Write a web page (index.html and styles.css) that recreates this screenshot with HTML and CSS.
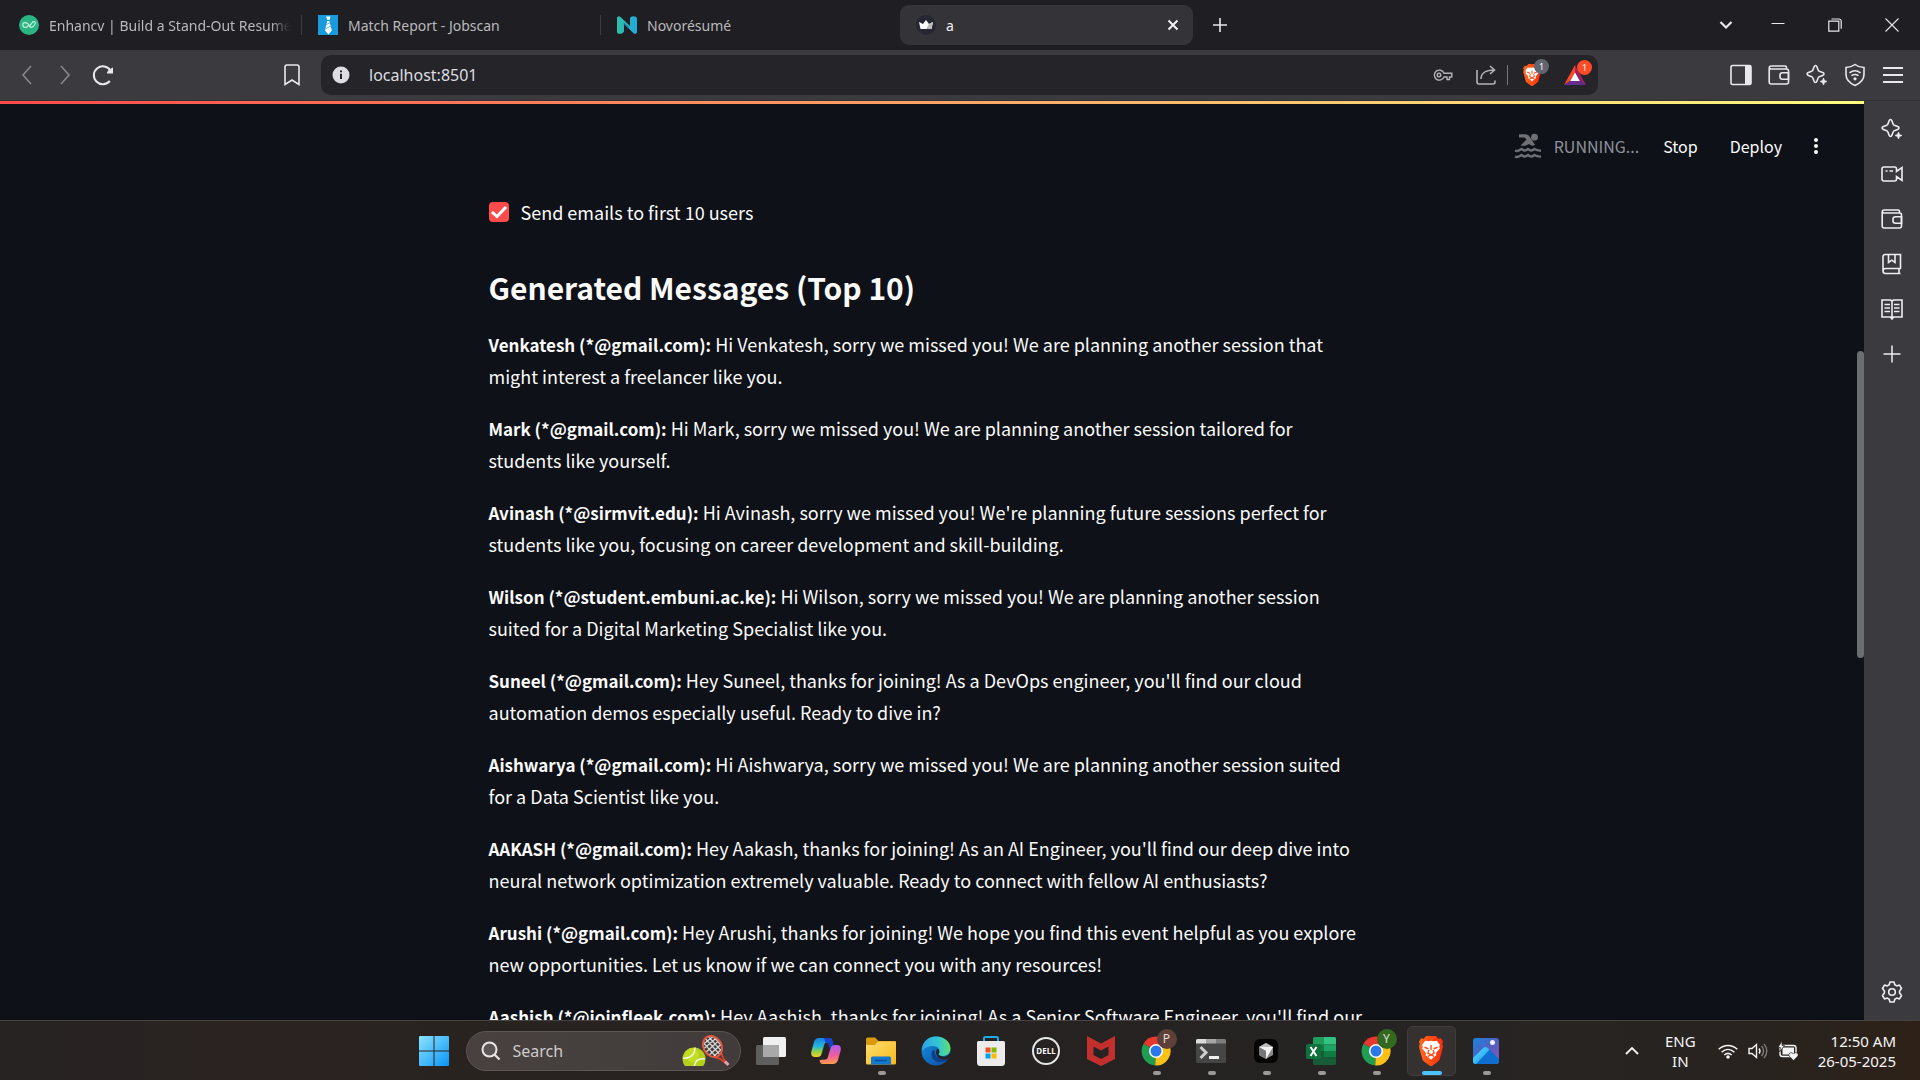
FILE: index.html
```html
<!DOCTYPE html>
<html lang="en">
<head>
<meta charset="utf-8">
<title>a</title>
<link rel="stylesheet" href="styles.css">
</head>
<body>
<svg class="defs" aria-hidden="true">
  <defs>
    <linearGradient id="g-win" x1="0" y1="0" x2="1" y2="1"><stop offset="0" stop-color="#8be4ff"/><stop offset="1" stop-color="#0a94f5"/></linearGradient>
    <linearGradient id="g-novo" x1="0" y1="0" x2="1" y2="0"><stop offset="0" stop-color="#2fbfa4"/><stop offset="1" stop-color="#1fa9de"/></linearGradient>
    <linearGradient id="g-lion" x1="0" y1="0" x2="1" y2="0"><stop offset="0" stop-color="#ff6a1f"/><stop offset="1" stop-color="#ff2c0a"/></linearGradient>
    <linearGradient id="g-folder" x1="0" y1="0" x2="1" y2="1"><stop offset="0" stop-color="#ffdf6e"/><stop offset="1" stop-color="#f9b81c"/></linearGradient>
    <linearGradient id="g-edge1" x1="0" y1="0" x2="1" y2="0"><stop offset="0" stop-color="#2aa4e8"/><stop offset=".6" stop-color="#35c8d0"/><stop offset="1" stop-color="#5fe06a"/></linearGradient>
    <linearGradient id="g-edge2" x1="0" y1="0" x2="1" y2="1"><stop offset="0" stop-color="#1590e0"/><stop offset="1" stop-color="#0c4aa0"/></linearGradient>
    <linearGradient id="g-cop1" x1="0" y1="0" x2="0" y2="1"><stop offset="0" stop-color="#1a7fe6"/><stop offset=".45" stop-color="#22b8d8"/><stop offset=".7" stop-color="#8bd14a"/><stop offset="1" stop-color="#f8cf2d"/></linearGradient>
    <linearGradient id="g-cop2" x1="0" y1="0" x2="0" y2="1"><stop offset="0" stop-color="#b05bf0"/><stop offset=".55" stop-color="#ee5e9c"/><stop offset="1" stop-color="#ff9b4a"/></linearGradient>
    <linearGradient id="g-photo" x1="0" y1="0" x2="1" y2="1"><stop offset="0" stop-color="#1784dc"/><stop offset=".55" stop-color="#5a5cc0"/><stop offset="1" stop-color="#8a58c0"/></linearGradient>
    <linearGradient id="g-hill" x1="0" y1="0" x2="1" y2="1"><stop offset="0" stop-color="#5fe0ff"/><stop offset="1" stop-color="#1592ea"/></linearGradient>
    <symbol id="i-sparkle" viewBox="0 0 22 22"><path d="M9.500 1.500c.7 0 1.100.5 1.400 1.300l1.200 3.300c.2.600.6 1 1.200 1.200l3.400 1.300c1.700.6 1.700 2.200 0 2.800l-3.400 1.300c-.6.200-1 .6-1.200 1.200l-1.200 3.300c-.6 1.700-2.200 1.700-2.800 0l-1.200-3.300c-.2-.6-.6-1-1.200-1.200l-3.300-1.300c-1.700-.6-1.700-2.200 0-2.800l3.300-1.300c.6-.2 1-.6 1.200-1.200l1.200-3.300c.3-.8.700-1.300 1.400-1.300z" fill="none" stroke="currentColor" stroke-width="1.600"/><path d="M17.500 14l1 2.500 2.500 1-2.500 1-1 2.500-1-2.500-2.500-1 2.500-1z" fill="currentColor" stroke="currentColor" stroke-width=".7"/></symbol>
    <symbol id="i-wallet" viewBox="0 0 22 22"><g fill="none" stroke="currentColor" stroke-width="1.600"><path d="M18.500 5V3.500A1.500 1.500 0 0 0 17 2H3.500A2 2 0 0 0 1.200 4v14a2 2 0 0 0 2 2h15.300a2 2 0 0 0 2-2V7a2 2 0 0 0-2-2H3.200A2 2 0 0 1 1.300 4"/><path d="M20.500 8.800h-6a2.500 2.500 0 0 0-2.500 2.500v1.400a2.500 2.500 0 0 0 2.500 2.500h6z"/></g></symbol>
    <symbol id="i-lion" viewBox="0 0 24 28"><path d="M7.500 0h9l2.300 2.600 2.400-.4 2 2.900-.7 2.200.7 2.700-3 11.300c-.4 1.400-1 2-2 2.700L12.900 28h-1.800l-5.300-4c-1-.7-1.600-1.300-2-2.700L.8 10l.7-2.700-.7-2.200 2-2.900 2.400.4z" fill="url(#g-lion)"/><path d="M12 4.400l2.600.5 2.700-.5 3 3.800-.6 1.600.5 1.900-3.500 4.200.2 2.200-1.600 1-3.300 3.100-3.300-3.100-1.600-1 .2-2.200-3.500-4.200.5-1.900-.6-1.600 3-3.800 2.700.5z" fill="#fff"/><path d="M12 8.500v4.500M10 13l-.9 3 2.900 1.600 2.900-1.600-.9-3M5.900 10.500l3.700 1.400M18.100 10.500l-3.700 1.400M9 19l3-1.300L15 19" fill="none" stroke="#ff4b14" stroke-width="1.300"/></symbol>
    <symbol id="i-chrome" viewBox="0 0 30 30"><path d="M15 15L2.500 7.800A14.500 14.500 0 0 1 28 8.500z" fill="#e8372c"/><path d="M15 15L2.500 7.800A14.500 14.500 0 0 0 14.200 29.500z" fill="#1f9d50"/><path d="M15 15l13-6.500A14.500 14.500 0 0 1 14.200 29.500z" fill="#fbc116"/><circle cx="15" cy="15" r="7" fill="#fff"/><circle cx="15" cy="15" r="5.500" fill="#2a77ea"/></symbol>
  </defs>
</svg>

<header class="tabstrip">
  <nav class="tabs" aria-label="Tabs">
    <a class="tab" href="#enhancv">
      <svg class="fav" viewBox="0 0 20 20"><circle cx="10" cy="10" r="10" fill="#2bb584"/><path d="M9.500 10.500C8 13.500 3.800 12.800 3.800 10S7.500 6.800 9.500 9.500l1 1.700c1.800 2.600 5.200-.2 5.800-3.200.2-1.600-1.900-1.900-2.900-.6L10.500 11" fill="none" stroke="#c4f3df" stroke-width="1.200"/></svg>
      <span class="tab-title fade">Enhancv | Build a Stand-Out Resume</span>
    </a>
    <a class="tab" href="#jobscan">
      <svg class="fav" viewBox="0 0 20 20"><path fill="#189bdc" d="M0 0h20v20H0z"/><path d="M8 1.500h4.500l-1 3.500H9.500zM9.200 6h2.200l2.400 9.500-3.300 4-3.500-4z" fill="#fff"/><path d="M8.500 9.500l4-2M7.500 14l6-3.500" stroke="#189bdc" stroke-width=".7"/></svg>
      <span class="tab-title">Match Report - Jobscan</span>
    </a>
    <a class="tab plain" href="#novoresume">
      <svg class="fav" viewBox="0 0 20 20"><path d="M0 3.200C0 1 2.200.5 3.500 2L13 11V3.500C13 .5 20 .5 20 3.500v13c0 2.500-2.300 3-3.700 1.500L7 9v7.500C6 19 0 20 0 17z" fill="url(#g-novo)"/><path d="M7 8.500l4.500 4.500" stroke="#176d93" stroke-width="1.200"/></svg>
      <span class="tab-title">Novorésumé</span>
    </a>
    <a class="tab active" href="#a" aria-current="page">
      <svg class="fav" viewBox="0 0 20 20"><circle cx="10" cy="10" r="10" fill="#262733"/><path d="M3 7l4 2 3-4 3 4 4-2-1.500 7h-11z" fill="#fff"/><path d="M17 7l-4 2-3 5h5.500z" fill="#bbb"/></svg>
      <span class="tab-title">a</span>
      <button class="icon-btn tab-close" aria-label="Close tab"><svg width="12" height="12" viewBox="0 0 12 12"><path d="M1.500 1.500l9 9M10.500 1.500l-9 9" stroke="currentColor" stroke-width="2"/></svg></button>
    </a>
  </nav>
  <button class="icon-btn new-tab" aria-label="New tab"><svg width="14" height="14" viewBox="0 0 14 14"><path d="M7 0v14M0 7h14" stroke="currentColor" stroke-width="1.600"/></svg></button>
  <div class="window-controls">
    <button class="icon-btn tab-search" aria-label="Search tabs"><svg width="14" height="14" viewBox="0 0 14 14"><path d="M1.500 4L7 9.500 12.500 4" fill="none" stroke="currentColor" stroke-width="2.200"/></svg></button>
    <button class="icon-btn" aria-label="Minimize"><svg width="14" height="14" viewBox="0 0 14 14"><path d="M.5 5.500h13" stroke="currentColor"/></svg></button>
    <button class="icon-btn" aria-label="Restore"><svg width="14" height="14" viewBox="0 0 14 14"><path d="M.8 3.200h10v10H.8zM3.500 1h7.500a2.200 2.200 0 0 1 2.200 2.200v7.500" fill="none" stroke="currentColor" stroke-width="1.200"/></svg></button>
    <button class="icon-btn" aria-label="Close"><svg width="14" height="14" viewBox="0 0 14 14"><path d="M.5.5l13 13M13.500.5l-13 13" stroke="currentColor" stroke-width="1.100"/></svg></button>
  </div>
</header>

<div class="toolbar">
  <div class="nav-buttons">
    <button class="icon-btn dim" aria-label="Back"><svg width="22" height="22" viewBox="0 0 22 22"><path d="M15 2L7 11l8 9" fill="none" stroke="currentColor" stroke-width="1.600"/></svg></button>
    <button class="icon-btn dim" aria-label="Forward"><svg width="22" height="22" viewBox="0 0 22 22"><path d="M7 2l8 9-8 9" fill="none" stroke="currentColor" stroke-width="1.600"/></svg></button>
    <button class="icon-btn" aria-label="Reload"><svg width="22" height="22" viewBox="0 0 22 22"><path d="M17.800 17A9 9 0 1 1 18.500 6.500" fill="none" stroke="currentColor" stroke-width="2"/><path d="M21 3.500v6h-6c-.5-2 3-4.500 6-6z" fill="currentColor"/></svg></button>
    <button class="icon-btn bookmark" aria-label="Bookmark"><svg width="16" height="22" viewBox="0 0 16 22"><path d="M1 3a2 2 0 0 1 2-2h10a2 2 0 0 1 2 2v17.500l-7-4.500-7 4.500z" fill="none" stroke="currentColor" stroke-width="1.600"/></svg></button>
  </div>
  <div class="address">
    <svg width="18" height="18" viewBox="0 0 18 18"><circle cx="9" cy="9" r="8.500" fill="#dedde3"/><path d="M9 7.800v5.200M9 4.500v1.800" stroke="#232228" stroke-width="2"/></svg>
    <input class="url" type="text" value="localhost:8501" aria-label="Address">
    <button class="icon-btn soft" aria-label="Passwords"><svg width="20" height="20" viewBox="0 0 20 20"><g fill="none" stroke="currentColor" stroke-width="1.400"><path d="M11 8.200A5 5 0 1 0 11 12h3v2.500h2.500V12h2.300V8.200z"/><circle cx="6" cy="10" r="1.800"/></g></svg></button>
    <button class="icon-btn soft" aria-label="Share"><svg width="20" height="20" viewBox="0 0 20 20"><path d="M1 5v12a2 2 0 0 0 2 2h14a2 2 0 0 0 2-2v-1.500M5 14c0-5 4-9 13-9M14 1l4.500 4L14 9" fill="none" stroke="currentColor" stroke-width="1.600"/></svg></button>
    <span class="address-rule"></span>
    <button class="icon-btn badged" aria-label="Shields"><svg width="20" height="22"><use href="#i-lion"/></svg><span class="badge gray">1</span></button>
    <button class="icon-btn badged" aria-label="Rewards"><svg width="22" height="20" viewBox="0 0 22 20"><path d="M11 0L0 20l6-4 5-8z" fill="#ff4724"/><path d="M11 0l11 20-6-4-5-8z" fill="#9e1f63"/><path d="M0 20h22l-6-4H6z" fill="#662d91"/><path d="M11 7.500l4.800 8.500H6.200z" fill="#fff"/></svg><span class="badge red">1</span></button>
  </div>
  <div class="tools">
    <button class="icon-btn" aria-label="Sidebar"><svg width="22" height="22" viewBox="0 0 22 22"><rect x="1" y="1.500" width="20" height="19" rx="1.500" fill="none" stroke="currentColor" stroke-width="1.600"/><path d="M15 1.500h6v19h-6z" fill="currentColor"/></svg></button>
    <button class="icon-btn" aria-label="Wallet"><svg width="22" height="22"><use href="#i-wallet"/></svg></button>
    <button class="icon-btn" aria-label="Leo AI"><svg width="22" height="22"><use href="#i-sparkle"/></svg></button>
    <button class="icon-btn" aria-label="VPN"><svg width="22" height="24" viewBox="0 0 22 24"><g fill="none" stroke="currentColor" stroke-width="1.600"><path d="M11 1.500c2.500 2 5.500 2.800 9 3v7c0 5-3.500 8.500-9 11-5.500-2.500-9-6-9-11v-7c3.500-.2 6.500-1 9-3z"/><path d="M5.500 9.800c3.500-2.600 7.500-2.600 11 0M7.500 12.700c2.300-1.500 4.700-1.500 7 0"/></g><circle cx="11" cy="15.800" r="1.600" fill="currentColor"/></svg></button>
    <button class="icon-btn" aria-label="Menu"><svg width="22" height="18" viewBox="0 0 22 18"><path d="M1 2h20M1 9h20M1 16h20" stroke="currentColor" stroke-width="1.800"/></svg></button>
  </div>
</div>

<div class="workspace">
  <div class="page">
    <div class="decoration"></div>
    <div class="app-header">
      <svg class="swimmer" width="28" height="26" viewBox="0 0 28 26" fill="none" stroke="currentColor"><circle cx="20.500" cy="4.200" r="3.400" fill="currentColor" stroke="none"/><path d="M5 1.300h6.500c2 0 3 1 4 2.200l5.500 8.300c-1.500 1.200-3 1.200-4.500.2l-1.500-1-4 2-4.500-.5 6-6L10.500 4.500H5z" fill="currentColor" stroke="none"/><path d="M1 17.500c3 1.500 4 0 6.500-1.500 2.500 1.500 3.500 2.500 6.500 0 3 2.500 4 1.500 6.500 0 2.500 1.500 3.500 2 6.500 1.500M1 23.500c3 1.500 4 0 6.500-1.500 2.500 1.500 3.500 2.500 6.500 0 3 2.500 4 1.500 6.500 0 2.500 1.500 3.500 2 6.500 1.500" stroke-width="2.400"/></svg>
      <span class="status">RUNNING...</span>
      <button class="text-btn stop">Stop</button>
      <button class="text-btn deploy">Deploy</button>
      <button class="icon-btn" aria-label="Main menu"><svg width="6" height="18" viewBox="0 0 6 18" fill="currentColor"><circle cx="3" cy="3" r="2"/><circle cx="3" cy="9" r="2"/><circle cx="3" cy="15" r="2"/></svg></button>
    </div>
    <main class="content">
      <label class="check"><input type="checkbox" checked><span>Send emails to first 10 users</span></label>
      <h2>Generated Messages (Top 10)</h2>
      <p><strong>Venkatesh (*@gmail.com):</strong> Hi Venkatesh, sorry we missed you! We are planning another session that might interest a freelancer like you.</p>
      <p><strong>Mark (*@gmail.com):</strong> Hi Mark, sorry we missed you! We are planning another session tailored for students like yourself.</p>
      <p><strong>Avinash (*@sirmvit.edu):</strong> Hi Avinash, sorry we missed you! We're planning future sessions perfect for students like you, focusing on career development and skill-building.</p>
      <p><strong>Wilson (*@student.embuni.ac.ke):</strong> Hi Wilson, sorry we missed you! We are planning another session suited for a Digital Marketing Specialist like you.</p>
      <p><strong>Suneel (*@gmail.com):</strong> Hey Suneel, thanks for joining! As a DevOps engineer, you'll find our cloud automation demos especially useful. Ready to dive in?</p>
      <p><strong>Aishwarya (*@gmail.com):</strong> Hi Aishwarya, sorry we missed you! We are planning another session suited for a Data Scientist like you.</p>
      <p><strong>AAKASH (*@gmail.com):</strong> Hey Aakash, thanks for joining! As an AI Engineer, you'll find our deep dive into neural network optimization extremely valuable. Ready to connect with fellow AI enthusiasts?</p>
      <p><strong>Arushi (*@gmail.com):</strong> Hey Arushi, thanks for joining! We hope you find this event helpful as you explore new opportunities. Let us know if we can connect you with any resources!</p>
      <p><strong>Aashish (*@joinfleek.com):</strong> Hey Aashish, thanks for joining! As a Senior Software Engineer, you'll find our</p>
    </main>
    <div class="scroll-thumb"></div>
  </div>
  <aside class="sidebar">
    <button class="icon-btn" aria-label="Leo AI"><svg width="22" height="22"><use href="#i-sparkle"/></svg></button>
    <button class="icon-btn" aria-label="Talk"><svg width="22" height="22" viewBox="0 0 22 22"><path d="M3 4h10.500a2 2 0 0 1 2 2v2.500L21 4.500v13l-5.500-4V16a2 2 0 0 1-2 2H3a2 2 0 0 1-2-2V6a2 2 0 0 1 2-2z" fill="none" stroke="currentColor" stroke-width="1.600"/><path d="M4.500 8h2M8.500 8h3.500" stroke="currentColor" stroke-width="1.600"/></svg></button>
    <button class="icon-btn" aria-label="Wallet"><svg width="22" height="22"><use href="#i-wallet"/></svg></button>
    <button class="icon-btn" aria-label="Bookmarks"><svg width="22" height="22" viewBox="0 0 22 22"><path d="M19.500 15.500V1.500H4a2 2 0 0 0-2 2V18a2.500 2.500 0 0 0 2.500 2.500h15M20 15.500H4.500A2.500 2.500 0 0 0 2 18M18 15.500v5M7.500 1.500v8l3.300-2.300L14 9.500v-8" fill="none" stroke="currentColor" stroke-width="1.600"/></svg></button>
    <button class="icon-btn" aria-label="Reading list"><svg width="22" height="22" viewBox="0 0 22 22"><path d="M1 2h8.500L11 3l1.500-1H21v17h-8.500L11 21l-1.500-2H1zM11 3v17M3.500 6.500H9M3.500 10H9M3.500 13.500H9M13 6.500h5.500M13 10h5.500M13 13.500h5.500" fill="none" stroke="currentColor" stroke-width="1.600"/></svg></button>
    <button class="icon-btn" aria-label="Add to sidebar"><svg width="22" height="22" viewBox="0 0 22 22"><path d="M11 2.500v17M2.500 11h17" stroke="currentColor" stroke-width="1.500"/></svg></button>
    <button class="icon-btn settings" aria-label="Settings"><svg width="22" height="22" viewBox="0 0 22 22"><path d="M9 1h4l.8 2.800 2 1.100 2.700-.8 2 3.400L18.600 10v2l1.900 2.500-2 3.400-2.700-.8-2 1.100L13 21H9l-.8-2.800-2-1.100-2.700.8-2-3.400L3.400 12v-2L1.500 7.500l2-3.400 2.700.8 2-1.100z" fill="none" stroke="currentColor" stroke-width="1.600" stroke-linejoin="round"/><circle cx="11" cy="11" r="3.300" fill="none" stroke="currentColor" stroke-width="1.600"/></svg></button>
  </aside>
</div>

<footer class="taskbar">
  <div class="apps">
    <button class="app" aria-label="Start"><svg width="30" height="30" viewBox="0 0 30 30"><path d="M0 1a1 1 0 0 1 1-1h13.500v14.500H0zM15.500 0H29a1 1 0 0 1 1 1v13.500H15.500zM0 15.500h14.500V30H1a1 1 0 0 1-1-1zM15.500 15.500H30V29a1 1 0 0 1-1 1H15.500z" fill="url(#g-win)"/></svg></button>
    <div class="search">
      <svg width="20" height="20" viewBox="0 0 20 20"><circle cx="8.500" cy="8.500" r="7" fill="#5b5655" stroke="#e8e6e5" stroke-width="2"/><path d="M13.500 13.500l5 5" stroke="#e8e6e5" stroke-width="2.200"/></svg>
      <input type="text" placeholder="Search" aria-label="Search">
      <svg width="48" height="32" viewBox="0 0 48 32"><defs><clipPath id="c-ball"><path d="M0 0h48v31H0z"/></clipPath><clipPath id="c-head"><ellipse cx="30.500" cy="11.500" rx="9" ry="11" transform="rotate(-30 30.500 11.500)"/></clipPath></defs><path d="M33.500 22.500c4 .5 7 2.500 10 6M39.500 18c.5 4 2.500 7 5.500 10" fill="none" stroke="#d8402e" stroke-width="1.800"/><path d="M43 26.500l3.500 3.500" stroke="#d9a3b4" stroke-width="3"/><g clip-path="url(#c-head)"><path d="M20 0h24v26H20z" fill="#45403f"/><path d="M18 4l18 20M21 1l20 22M25 0l18 20M30 0l14 16M16 8l16 18M38 0L20 15M42 1L22 19M43 6L25 22M43 11L29 24M33 0L19 11" stroke="#dcdcdc" stroke-width="1.200"/></g><ellipse cx="30.500" cy="11.500" rx="9" ry="11" transform="rotate(-30 30.500 11.500)" fill="none" stroke="#e2583e" stroke-width="2"/><g clip-path="url(#c-ball)"><circle cx="12" cy="24" r="11.500" fill="#b4cf1c"/><circle cx="10" cy="20" r="7" fill="#cde62c" opacity=".6"/><path d="M1 23c7 1 12-3 12-10.500M12 32c1-6 5-9 11-8" fill="none" stroke="#f6fae0" stroke-width="1.500"/></g></svg>
    </div>
    <button class="app" aria-label="Task view"><svg width="30" height="28" viewBox="0 0 30 28"><rect x="7" width="23" height="20" rx="1.500" fill="#f0f0f0"/><rect y="8" width="23" height="20" rx="1.500" fill="#5f5e5e"/><path d="M7 8h16v12H7z" fill="#a9a9a9"/></svg></button>
    <button class="app" aria-label="Copilot"><svg width="30" height="26" viewBox="0 0 30 26"><path d="M8 0h10c2.500 0 3 1.500 3.500 4l-6 .5c-1.500 0-2 1-2.500 3L10.500 16c-.7 2.300-1.800 3-4 3H4c-3.500 0-4.500-2.500-3.500-6l2.500-9C3.800 1.300 5.500 0 8 0z" fill="url(#g-cop1)"/><path d="M22 26H12c-2.500 0-3-1.500-3.500-4l6-.5c1.500 0 2-1 2.500-3L19.500 10c.7-2.300 1.800-3 4-3H26c3.500 0 4.500 2.500 3.500 6l-2.500 9c-.8 2.700-2.500 4-5 4z" fill="url(#g-cop2)"/><path d="M13 0h5c2.500 0 3.300 1.600 4 4.500l.7 2.600c-2 .3-2.700 1-3.200 2.900l-.5 1.500-1.500-5c-.5-1.600-1.500-2.300-3-2z" fill="#1743c9"/></svg></button>
    <button class="app open" aria-label="File Explorer"><svg width="30" height="28" viewBox="0 0 30 28"><path d="M0 2a1.500 1.500 0 0 1 1.500-1.500H9L12.500 4H29a1 1 0 0 1 1 1v8H0z" fill="#d99a0b"/><path d="M0 8h9l3-3.500h17a1 1 0 0 1 1 1V26a1.500 1.500 0 0 1-1.500 1.500h-27A1.500 1.500 0 0 1 0 26z" fill="url(#g-folder)"/><path d="M5 27.500V21a1.500 1.500 0 0 1 1.500-1.500h17A1.500 1.500 0 0 1 25 21v6.500z" fill="#1279cf"/><path d="M9 23.500h12" stroke="#0b4f94" stroke-width="1.500"/></svg></button>
    <button class="app" aria-label="Edge"><svg width="30" height="30" viewBox="0 0 30 30"><circle cx="15" cy="15" r="14.500" fill="url(#g-edge2)"/><path d="M1 13C2 5 8 .5 15 .5c9 0 14.500 6 14.500 12 0 5-4 7.500-8 7.500-3 0-4.500-1-4-2 2-2.500 1-7.500-5-8-5 0-9 1.500-11.500 5z" fill="url(#g-edge1)"/><path d="M12 14c-3 4-1.500 12 7.500 12 4 0 6.500-1.500 8-3.500.5-.5 0-1-.7-.7C20 24.500 12 21 14 14.500z" fill="#0b3f86"/><path d="M20 20c3 1.500 7 .5 9.500-3L30 21l-2.500 1.500c-3 1.500-8 1-10.500-1.500-2.500-2.500-2.500-6-.5-8.500 2 1.200 2.500 3.500 1 5.500 0 1 1 1.700 2.500 2z" fill="#262322"/></svg></button>
    <button class="app" aria-label="Microsoft Store"><svg width="30" height="30" viewBox="0 0 30 30"><path d="M8 8V2.500A1.500 1.500 0 0 1 9.500 1h11A1.500 1.500 0 0 1 22 2.500V8" fill="none" stroke="#20a9e5" stroke-width="2"/><path d="M1 6.500A1.500 1.500 0 0 1 2.500 5h25A1.500 1.500 0 0 1 29 6.500v20a3.500 3.500 0 0 1-3.500 3.500h-21A3.500 3.500 0 0 1 1 26.500z" fill="#ececec"/><path d="M9.500 11.500h5v5h-5z" fill="#f25022"/><path d="M15.500 11.500h5v5h-5z" fill="#7fba00"/><path d="M9.500 17.500h5v5h-5z" fill="#00a4ef"/><path d="M15.500 17.500h5v5h-5z" fill="#ffb900"/></svg></button>
    <button class="app" aria-label="Dell"><span class="dell">DELL</span></button>
    <button class="app" aria-label="McAfee"><svg width="28" height="30" viewBox="0 0 28 30"><path d="M0 0l14 7.500L28 0v23l-14 7-14-7zM6.500 10.500V19l7.500 4 7.500-4v-8.500l-7.500 4z" fill="#c32f2d" fill-rule="evenodd"/></svg></button>
    <button class="app open" aria-label="Chrome, profile P"><svg width="30" height="30"><use href="#i-chrome"/></svg><span class="profile brown">P</span></button>
    <button class="app open" aria-label="Terminal"><svg width="30" height="24" viewBox="0 0 30 24"><rect width="30" height="24" rx="1.500" fill="#464646"/><path d="M0 1.500A1.500 1.500 0 0 1 1.500 0H10v4.500H0z" fill="#dcdcdc"/><path d="M10 0h10v4.500H10z" fill="#a5a5a5"/><path d="M20 0h8.500A1.500 1.500 0 0 1 30 1.500v3H20z" fill="#7d7d7d"/><path d="M4.500 8l5.500 5.500L4.500 19" fill="none" stroke="#cfcfcf" stroke-width="3"/><path d="M13 18.500h10" stroke="#efefef" stroke-width="3"/></svg></button>
    <button class="app open" aria-label="Cursor"><svg width="24" height="24" viewBox="0 0 24 24"><rect width="24" height="24" rx="6" fill="#050505"/><path d="M12 4l7 4v8l-7 4-7-4V8z" fill="#8b8b8b"/><path d="M12 4l7 4-7 4-7-4z" fill="#bdbdbd"/><path d="M5 8h14l-7 12v-8z" fill="#f3f3f3"/><path d="M5 8l7 4v8l-7-4z" fill="#777"/></svg></button>
    <button class="app open" aria-label="Excel"><svg width="30" height="28" viewBox="0 0 30 28"><path d="M7 1.500A1.500 1.500 0 0 1 8.500 0H18v9H7z" fill="#1f9d5b"/><path d="M18 0h10.500A1.500 1.500 0 0 1 30 1.500V7.500H18z" fill="#33c481"/><path d="M18 7.500h12v6.500H18z" fill="#21a366"/><path d="M7 7.500h11V14H7z" fill="#107c41"/><path d="M18 14h12v6.500H18z" fill="#107c41"/><path d="M7 14h11v6.500h12v6a1.500 1.500 0 0 1-1.500 1.500h-20A1.500 1.500 0 0 1 7 26.500z" fill="#185c37"/><rect y="7" width="15" height="15" rx="1.500" fill="#11713c"/><path d="M4.500 10l6 9M10.500 10l-6 9" stroke="#fff" stroke-width="2"/></svg></button>
    <button class="app open" aria-label="Chrome, profile Y"><svg width="30" height="30"><use href="#i-chrome"/></svg><span class="profile green">Y</span></button>
    <button class="app open current" aria-label="Brave"><svg width="26" height="30"><use href="#i-lion"/></svg></button>
    <button class="app open" aria-label="Photos"><svg width="26" height="26" viewBox="0 0 26 26"><rect width="26" height="26" rx="3" fill="url(#g-photo)"/><path d="M0 20L10.500 9.800c1.300-1.200 2.700-1.200 4 0L26 21v2a3 3 0 0 1-3 3H3a3 3 0 0 1-3-3z" fill="#0f6fd0"/><path d="M0 20L10.500 9.800c1.300-1.200 2.700-1.200 4 0l2 2L3 26a3 3 0 0 1-3-3z" fill="url(#g-hill)"/><circle cx="19.500" cy="4.500" r="2.500" fill="#eaf1fb"/></svg></button>
  </div>
  <div class="tray">
    <button class="icon-btn tray-more" aria-label="Show hidden icons"><svg width="14" height="14" viewBox="0 0 14 14"><path d="M1 10l6-6 6 6" fill="none" stroke="currentColor" stroke-width="1.800"/></svg></button>
    <div class="lang">ENG<br>IN</div>
    <div class="tray-icons">
      <svg width="20" height="20" viewBox="0 0 20 20" fill="none" stroke="currentColor" stroke-width="1.500"><path d="M.7 8.300c5.500-5.200 13.100-5.200 18.600 0M3.600 11.200c3.900-3.600 8.900-3.600 12.800 0M6.300 14c2.300-2 5.100-2 7.400 0"/><circle cx="10" cy="16" r="1.800" fill="currentColor" stroke="none"/></svg>
      <svg width="20" height="20" viewBox="0 0 20 20" fill="none" stroke="currentColor" stroke-width="1.400"><path d="M1 7.500h3L8.500 3.500v13L4 12.500H1z"/><path d="M11 7.500c1.200 1.500 1.200 3.500 0 5"/><path d="M13.500 5c2.500 3 2.500 7 0 10M16 3c3.700 4.500 3.700 9.500 0 14" opacity=".4"/></svg>
      <svg width="20" height="20" viewBox="0 0 20 20"><rect x="2" y="4.500" width="16" height="11" rx="2.500" fill="none" stroke="currentColor" stroke-width="1.400"/><path d="M4.500 6.500H16v7H4.500z" fill="currentColor"/><path d="M4 0L0 6.500h2.500L1.500 11 6.500 4.500H4z" fill="currentColor" stroke="#262322" stroke-width=".7"/><path d="M15.500 19.500l-4.500-4.600c-1-2.900 2.800-4.400 4.500-1.900 1.700-2.500 5.500-1 4.500 1.900z" fill="currentColor" stroke="#262322" stroke-width=".7"/></svg>
    </div>
    <time class="clock" datetime="2025-05-26T00:50">12:50 AM<br>26-05-2025</time>
  </div>
</footer>
</body>
</html>
```
FILE: styles.css
```css
* {
  box-sizing: border-box;
}

body {
  margin: 0;
  height: 100vh;
  display: flex;
  flex-direction: column;
  overflow: hidden;
  background: #0e1117;
  color: #fafafa;
  font-family: "Noto Sans", "Open Sans", sans-serif;
  font-size: 14px;
}

.defs {
  position: absolute;
  width: 0;
  height: 0;
}

svg {
  display: block;
  flex: none;
}

button,
input {
  font: inherit;
  color: inherit;
}

button {
  border: 0;
  padding: 0;
  background: none;
}

.icon-btn {
  display: grid;
  place-items: center;
  flex: none;
}

/* Tab strip */
.tabstrip {
  flex: none;
  height: 50px;
  display: flex;
  align-items: center;
  padding-left: 3px;
  background: #1f1e23;
  color: #e8e8ea;
}

.tabs {
  display: flex;
  flex: 0 1 1190px;
  min-width: 0;
}

.tab {
  flex: 0 1 299px;
  min-width: 0;
  height: 40px;
  display: flex;
  align-items: center;
  gap: 10px;
  padding: 0 12px 0 16px;
  color: #b9b9bc;
  text-decoration: none;
  background: linear-gradient(#3c3b40, #3c3b40) right center / 1px 20px no-repeat;
}

.tab.plain {
  background: none;
}

.tab.active {
  flex-basis: 293px;
  border-radius: 9px;
  background: #343338;
  color: #f2f2f3;
}

.fav {
  width: 20px;
  height: 20px;
}

.tab-title {
  flex: 1;
  overflow: hidden;
  white-space: nowrap;
}

.fade {
  mask-image: linear-gradient(to right, #000 92%, transparent);
}

.tab-close {
  width: 16px;
  height: 16px;
}

.new-tab {
  width: 54px;
  height: 40px;
}

.window-controls {
  margin-left: auto;
  display: flex;
}

.window-controls .icon-btn {
  width: 57px;
  height: 50px;
}

.window-controls .tab-search {
  width: 46px;
}

/* Toolbar */
.toolbar {
  flex: none;
  height: 51px;
  display: flex;
  align-items: center;
  background: #3b3a3f;
  border-bottom: 1px solid #323136;
  color: #e9e8ec;
}

.nav-buttons {
  flex: none;
  width: 321px;
  display: flex;
  padding: 0 10px 0 8px;
}

.nav-buttons .icon-btn {
  width: 38px;
}

.dim {
  color: #88878b;
}

.nav-buttons .bookmark {
  margin-left: auto;
}

.address {
  flex: 1;
  height: 40px;
  display: flex;
  align-items: center;
  padding: 0 2px 0 11px;
  border-radius: 10px;
  background: #252429;
}

.url {
  flex: 1;
  min-width: 0;
  margin-left: 16px;
  padding: 0 3px;
  border: 0;
  background: none;
  font-size: 16px;
  color: #dcdce0;
}

.address .icon-btn {
  width: 43px;
}

.soft {
  color: #b3b2b7;
}

.address-rule {
  width: 1px;
  height: 20px;
  margin-right: 2px;
  background: #77767b;
}

.badged {
  position: relative;
}

.badge {
  position: absolute;
  top: -5px;
  left: 24px;
  width: 15px;
  height: 15px;
  border-radius: 8px;
  font-size: 9px;
  line-height: 15px;
  text-align: center;
  color: #fff;
}

.gray {
  background: #62656f;
}

.red {
  background: #ff4a26;
}

.tools {
  flex: none;
  width: 322px;
  display: flex;
  justify-content: flex-end;
  padding-right: 8px;
}

.tools .icon-btn {
  width: 38px;
}

/* Page and browser sidebar */
.workspace {
  flex: 1;
  min-height: 0;
  display: flex;
}

.page {
  position: relative;
  flex: 1;
  overflow: hidden;
  padding-right: 7px;
  font-family: "Noto Sans CJK SC", "Noto Sans", sans-serif;
}

.decoration {
  height: 3px;
  margin-right: -7px;
  background: linear-gradient(to right, #ff4b4b, #fffd80);
}

.app-header {
  height: 84px;
  display: flex;
  align-items: center;
  justify-content: flex-end;
  padding-right: 38px;
  font-size: 16px;
}

.swimmer {
  color: #6e7076;
}

.status {
  margin-left: 12px;
  color: #8f929b;
}

.stop {
  margin-left: 24px;
}

.deploy {
  margin: 0 31px 0 32px;
}

.content {
  max-width: 880px;
  margin: 0 auto;
  font-size: 18px;
  line-height: 32px;
}

.check {
  display: flex;
  align-items: center;
  gap: 12px;
  margin-top: 8px;
}

.check input {
  appearance: none;
  width: 20px;
  height: 20px;
  margin: 0;
  border-radius: 4px;
  background: #ff4b4b url("data:image/svg+xml,%3Csvg xmlns='http://www.w3.org/2000/svg' viewBox='0 0 20 20'%3E%3Cpath d='M3 10l5 4.500L17 5' fill='none' stroke='%23fff' stroke-width='3'/%3E%3C/svg%3E");
}

.content h2 {
  margin: 38px 0 20px;
  font-size: 30px;
  line-height: 42px;
  font-weight: 700;
}

.content p {
  margin: 0 4px 20px 0;
}

.content strong {
  font-size: 17px;
  line-height: 20px;
}

.scroll-thumb {
  position: absolute;
  top: 250px;
  right: 0;
  width: 7px;
  height: 307px;
  border-radius: 4px;
  background: #6c6d71;
}

.sidebar {
  flex: none;
  width: 56px;
  display: flex;
  flex-direction: column;
  align-items: center;
  padding: 5px 0 6px;
  background: #3b3a3f;
  color: #eeedf0;
}

.sidebar .icon-btn {
  width: 40px;
  height: 45px;
}

.sidebar .settings {
  margin-top: auto;
}

/* Taskbar */
.taskbar {
  flex: none;
  height: 60px;
  display: grid;
  grid-template-columns: 1fr auto 1fr;
  border-top: 1px solid #474442;
  background: linear-gradient(to right, #262322, #2a2322 12%, #292320 25%, #252221 50%, #262423 75%, #28231f 92%, #2d2117);
}

.apps {
  grid-column: 2;
  display: flex;
  align-items: center;
}

.app {
  position: relative;
  width: 55px;
  height: 50px;
  display: grid;
  place-items: center;
}

.search {
  width: 275px;
  height: 40px;
  margin: 0 3px 0 4px;
  display: flex;
  align-items: center;
  padding: 0 10px 0 14px;
  border: 1px solid #5b5553;
  border-radius: 20px;
  background: linear-gradient(to right, #484140, #413c3b);
}

.search input {
  flex: 1;
  min-width: 0;
  margin-left: 11px;
  padding: 0 1px;
  border: 0;
  background: none;
  font-size: 16px;
}

.search input::placeholder {
  color: #cfcccb;
  opacity: 1;
}

.open::after {
  content: "";
  position: absolute;
  bottom: 1px;
  left: 24px;
  width: 8px;
  height: 4px;
  border-radius: 2px;
  background: #9b9998;
}

.current::before {
  content: "";
  position: absolute;
  inset: 0 3px;
  z-index: -1;
  border: 1px solid #3f3c3b;
  border-radius: 5px;
  background: #343130;
}

.current {
  isolation: isolate;
}

.current::after {
  left: 18px;
  width: 20px;
  background: #4cc2ff;
}

.dell {
  width: 28px;
  height: 28px;
  border: 2px solid #e6e6e6;
  border-radius: 14px;
  font-size: 8px;
  font-weight: 700;
  line-height: 24px;
  text-align: center;
}

.profile {
  position: absolute;
  top: 3px;
  left: 28px;
  width: 20px;
  height: 20px;
  border-radius: 10px;
  font-size: 12px;
  line-height: 20px;
  text-align: center;
  color: #e4dcd8;
}

.brown {
  background: #5d4037;
}

.green {
  background: #33691e;
}

.tray {
  display: flex;
  align-items: center;
  justify-content: flex-end;
  padding-right: 24px;
  font-size: 15px;
  line-height: 20px;
  color: #f5f4f4;
}

.tray-more {
  margin-right: 26px;
}

.lang {
  text-align: center;
}

.tray-icons {
  display: flex;
  gap: 10px;
  margin: 0 20px 0 22px;
}

.clock {
  text-align: right;
}
```
